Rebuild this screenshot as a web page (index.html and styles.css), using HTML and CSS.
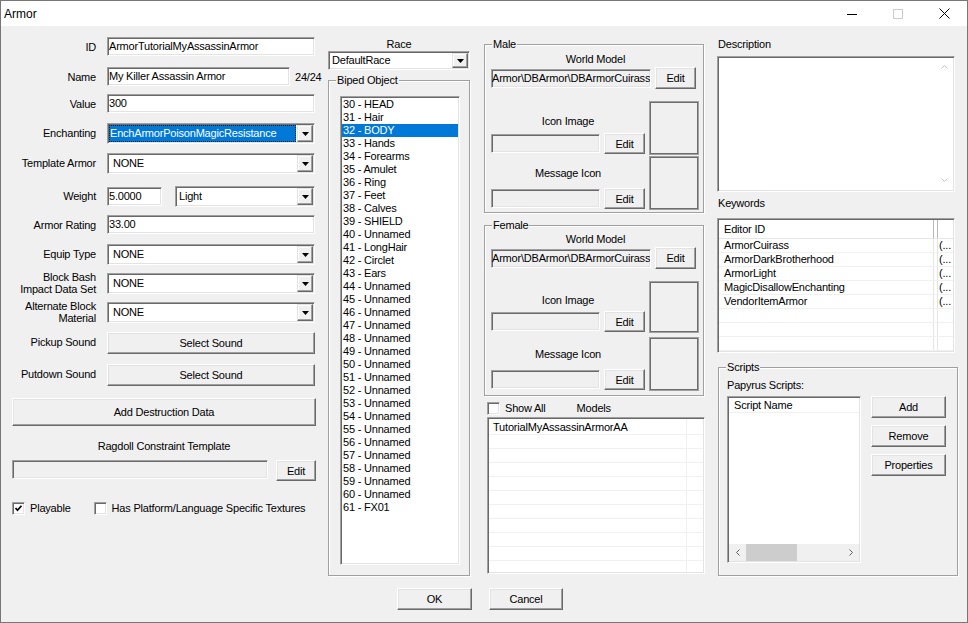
FILE: index.html
```html
<!DOCTYPE html>
<html lang="en">
<head>
    <meta charset="UTF-8">
    <title>Armor</title>
    <link rel="stylesheet" href="styles.css">
</head>
<body>
<div class="window">
    <div class="titlebar">
        <span class="title">Armor</span>
        <div class="caption-buttons">
            <span><svg width="10" height="10" viewBox="0 0 10 10"><path d="M0 5.5h10" stroke="#000"/></svg></span>
            <span><svg width="10" height="10" viewBox="0 0 10 10"><rect x="0.5" y="0.5" width="9" height="9" fill="none" stroke="#cccccc"/></svg></span>
            <span><svg width="11" height="11" viewBox="0 0 11 11"><path d="M0.5 0.5l10 10M10.5 0.5l-10 10" stroke="#000" stroke-width="1"/></svg></span>
        </div>
    </div>

    <div class="columns">
        <!-- record fields -->
        <div class="col-main">
            <div class="form">
                <div class="label">ID</div>
                <div class="field"><div class="edit full">ArmorTutorialMyAssassinArmor</div></div>

                <div class="label">Name</div>
                <div class="field"><div class="edit name">My Killer Assassin Armor</div><span class="counter">24/24</span></div>

                <div class="label">Value</div>
                <div class="field"><div class="edit full">300</div></div>

                <div class="label">Enchanting</div>
                <div class="field">
                    <div class="combo full">
                        <span class="combo-value selected">EnchArmorPoisonMagicResistance</span>
                        <span class="combo-btn"><svg width="7" height="4" viewBox="0 0 7 4"><path d="M0 0h7L3.5 4z"/></svg></span>
                    </div>
                </div>

                <div class="label">Template Armor</div>
                <div class="field">
                    <div class="combo full">
                        <span class="combo-value">NONE</span>
                        <span class="combo-btn"><svg width="7" height="4" viewBox="0 0 7 4"><path d="M0 0h7L3.5 4z"/></svg></span>
                    </div>
                </div>

                <div class="label">Weight</div>
                <div class="field">
                    <div class="edit weight">5.0000</div>
                    <div class="combo weight-class">
                        <span class="combo-value light">Light</span>
                        <span class="combo-btn"><svg width="7" height="4" viewBox="0 0 7 4"><path d="M0 0h7L3.5 4z"/></svg></span>
                    </div>
                </div>

                <div class="label">Armor Rating</div>
                <div class="field"><div class="edit full">33.00</div></div>

                <div class="label">Equip Type</div>
                <div class="field">
                    <div class="combo full">
                        <span class="combo-value">NONE</span>
                        <span class="combo-btn"><svg width="7" height="4" viewBox="0 0 7 4"><path d="M0 0h7L3.5 4z"/></svg></span>
                    </div>
                </div>

                <div class="label">Block Bash<br>Impact Data Set</div>
                <div class="field">
                    <div class="combo full">
                        <span class="combo-value">NONE</span>
                        <span class="combo-btn"><svg width="7" height="4" viewBox="0 0 7 4"><path d="M0 0h7L3.5 4z"/></svg></span>
                    </div>
                </div>

                <div class="label">Alternate Block<br>Material</div>
                <div class="field">
                    <div class="combo full">
                        <span class="combo-value">NONE</span>
                        <span class="combo-btn"><svg width="7" height="4" viewBox="0 0 7 4"><path d="M0 0h7L3.5 4z"/></svg></span>
                    </div>
                </div>

                <div class="label">Pickup Sound</div>
                <div class="field"><div class="btn full">Select Sound</div></div>

                <div class="label">Putdown Sound</div>
                <div class="field"><div class="btn full">Select Sound</div></div>
            </div>

            <div class="btn destruction">Add Destruction Data</div>
            <div class="ragdoll-caption">Ragdoll Constraint Template</div>
            <div class="ragdoll-row">
                <div class="edit readonly ragdoll"></div>
                <div class="btn ragdoll-edit">Edit</div>
            </div>

            <div class="flags">
                <span class="check"><svg width="9" height="9" viewBox="0 0 9 9"><path d="M1.5 4l2 2.2L7.5 1.8" fill="none" stroke="#000" stroke-width="1.7"/></svg></span>
                <span class="check-label">Playable</span>
                <span class="check second"></span>
                <span class="check-label">Has Platform/Language Specific Textures</span>
            </div>
        </div>

        <!-- race / biped slots -->
        <div class="col-race">
            <div class="race-caption">Race</div>
            <div class="combo small">
                <span class="combo-value">DefaultRace</span>
                <span class="combo-btn"><svg width="7" height="4" viewBox="0 0 7 4"><path d="M0 0h7L3.5 4z"/></svg></span>
            </div>
            <div class="group biped">
                <span class="group-title">Biped Object</span>
                <div class="list biped-list">
                    <div class="item">30 - HEAD</div>
                    <div class="item">31 - Hair</div>
                    <div class="item selected">32 - BODY</div>
                    <div class="item">33 - Hands</div>
                    <div class="item">34 - Forearms</div>
                    <div class="item">35 - Amulet</div>
                    <div class="item">36 - Ring</div>
                    <div class="item">37 - Feet</div>
                    <div class="item">38 - Calves</div>
                    <div class="item">39 - SHIELD</div>
                    <div class="item">40 - Unnamed</div>
                    <div class="item">41 - LongHair</div>
                    <div class="item">42 - Circlet</div>
                    <div class="item">43 - Ears</div>
                    <div class="item">44 - Unnamed</div>
                    <div class="item">45 - Unnamed</div>
                    <div class="item">46 - Unnamed</div>
                    <div class="item">47 - Unnamed</div>
                    <div class="item">48 - Unnamed</div>
                    <div class="item">49 - Unnamed</div>
                    <div class="item">50 - Unnamed</div>
                    <div class="item">51 - Unnamed</div>
                    <div class="item">52 - Unnamed</div>
                    <div class="item">53 - Unnamed</div>
                    <div class="item">54 - Unnamed</div>
                    <div class="item">55 - Unnamed</div>
                    <div class="item">56 - Unnamed</div>
                    <div class="item">57 - Unnamed</div>
                    <div class="item">58 - Unnamed</div>
                    <div class="item">59 - Unnamed</div>
                    <div class="item">60 - Unnamed</div>
                    <div class="item">61 - FX01</div>
                </div>
            </div>
        </div>

        <!-- male / female models -->
        <div class="col-models">
            <div class="group model male">
                <span class="group-title">Male</span>
                <div class="caption">World Model</div>
                <div class="model-row">
                    <div class="edit readonly path">Armor\DBArmor\DBArmorCuirass</div>
                    <div class="btn edit-btn">Edit</div>
                </div>
                <div class="icon-area">
                    <div class="icon-fields">
                        <div class="caption icon-caption">Icon Image</div>
                        <div class="model-row icon-row">
                            <div class="edit readonly icon-path"></div>
                            <div class="btn edit-btn">Edit</div>
                        </div>
                        <div class="caption message-caption">Message Icon</div>
                        <div class="model-row message-row">
                            <div class="edit readonly icon-path"></div>
                            <div class="btn edit-btn">Edit</div>
                        </div>
                    </div>
                    <div class="previews">
                        <div class="preview"></div>
                        <div class="preview"></div>
                    </div>
                </div>
            </div>

            <div class="group model female">
                <span class="group-title">Female</span>
                <div class="caption">World Model</div>
                <div class="model-row">
                    <div class="edit readonly path">Armor\DBArmor\DBArmorCuirass</div>
                    <div class="btn edit-btn">Edit</div>
                </div>
                <div class="icon-area">
                    <div class="icon-fields">
                        <div class="caption icon-caption">Icon Image</div>
                        <div class="model-row icon-row">
                            <div class="edit readonly icon-path"></div>
                            <div class="btn edit-btn">Edit</div>
                        </div>
                        <div class="caption message-caption">Message Icon</div>
                        <div class="model-row message-row">
                            <div class="edit readonly icon-path"></div>
                            <div class="btn edit-btn">Edit</div>
                        </div>
                    </div>
                    <div class="previews">
                        <div class="preview"></div>
                        <div class="preview"></div>
                    </div>
                </div>
            </div>

            <div class="models-bar">
                <span class="check"></span>
                <span class="check-label">Show All</span>
                <span class="models-caption">Models</span>
            </div>
            <div class="list models-list">
                <div class="models-body">
                    <div class="lv-row">TutorialMyAssassinArmorAA</div>
                    <div class="lv-row"></div>
                    <div class="lv-row"></div>
                    <div class="lv-row"></div>
                    <div class="lv-row"></div>
                    <div class="lv-row"></div>
                    <div class="lv-row"></div>
                    <div class="lv-row"></div>
                    <div class="lv-row"></div>
                    <div class="lv-row"></div>
                    <div class="lv-row"></div>
                </div>
            </div>
        </div>

        <!-- description, keywords, scripts -->
        <div class="col-side">
            <div class="side-caption">Description</div>
            <div class="list memo">
                <div class="memo-scroll">
                    <svg width="7" height="4" viewBox="0 0 7 4"><path d="M0.5 3.5L3.5 0.5l3 3" fill="none" stroke="#c2c2c2"/></svg>
                    <svg width="7" height="4" viewBox="0 0 7 4"><path d="M0.5 0.5L3.5 3.5l3-3" fill="none" stroke="#c2c2c2"/></svg>
                </div>
            </div>

            <div class="side-caption keywords-caption">Keywords</div>
            <div class="list keywords">
                <div class="kw-header">
                    <span class="kw-id">Editor ID</span><span class="kw-gap"></span><span class="kw-flag"></span>
                </div>
                <div class="kw-row"><span class="kw-id">ArmorCuirass</span><span class="kw-gap"></span><span class="kw-flag">(...</span></div>
                <div class="kw-row"><span class="kw-id">ArmorDarkBrotherhood</span><span class="kw-gap"></span><span class="kw-flag">(...</span></div>
                <div class="kw-row"><span class="kw-id">ArmorLight</span><span class="kw-gap"></span><span class="kw-flag">(...</span></div>
                <div class="kw-row"><span class="kw-id">MagicDisallowEnchanting</span><span class="kw-gap"></span><span class="kw-flag">(...</span></div>
                <div class="kw-row"><span class="kw-id">VendorItemArmor</span><span class="kw-gap"></span><span class="kw-flag">(...</span></div>
                <div class="kw-row"><span class="kw-id"></span><span class="kw-gap"></span><span class="kw-flag"></span></div>
                <div class="kw-row"><span class="kw-id"></span><span class="kw-gap"></span><span class="kw-flag"></span></div>
                <div class="kw-row"><span class="kw-id"></span><span class="kw-gap"></span><span class="kw-flag"></span></div>
            </div>

            <div class="group scripts">
                <span class="group-title">Scripts</span>
                <div class="papyrus">Papyrus Scripts:</div>
                <div class="scripts-body">
                    <div class="list scripts-list">
                        <div class="sl-header">Script Name</div>
                        <div class="sl-body"></div>
                        <div class="hscroll">
                            <span class="hs-arrow"><svg width="4" height="7" viewBox="0 0 4 7"><path d="M3.5 0.5L0.5 3.5l3 3" fill="none" stroke="#606060"/></svg></span>
                            <span class="hs-thumb"></span>
                            <span class="hs-track"></span>
                            <span class="hs-arrow"><svg width="4" height="7" viewBox="0 0 4 7"><path d="M0.5 0.5l3 3-3 3" fill="none" stroke="#606060"/></svg></span>
                        </div>
                    </div>
                    <div class="script-buttons">
                        <div class="btn">Add</div>
                        <div class="btn">Remove</div>
                        <div class="btn">Properties</div>
                    </div>
                </div>
            </div>
        </div>
    </div>

    <div class="footer">
        <div class="btn ok">OK</div>
        <div class="btn cancel">Cancel</div>
    </div>
</div>
</body>
</html>
```

FILE: styles.css
```css
* {
    margin: 0;
    padding: 0;
    box-sizing: border-box;
}

body {
    background: #f0f0f0;
    font-family: "Liberation Sans", Arial, sans-serif;
    font-size: 11px;
    letter-spacing: -0.2px;
    color: #000;
}

.window {
    width: 968px;
    height: 623px;
    border: 1px solid #777;
    background: #f0f0f0;
    display: flex;
    flex-direction: column;
    overflow: hidden;
}

/* title bar */
.titlebar {
    height: 25px;
    flex-shrink: 0;
    background: #fff;
    display: flex;
    align-items: center;
    justify-content: space-between;
}

.titlebar .title {
    font-size: 12px;
    letter-spacing: 0;
    padding-left: 3px;
}

.caption-buttons {
    display: flex;
    align-self: stretch;
}

.caption-buttons span {
    width: 46px;
    display: flex;
    align-items: center;
    justify-content: center;
}

/* columns */
.columns {
    display: flex;
    align-items: flex-start;
    height: 550px;
    padding-left: 11px;
}

.col-main {
    width: 304px;
}

.col-race {
    width: 142px;
    margin-left: 12px;
}

.col-models {
    width: 220px;
    margin-left: 14px;
}

.col-side {
    width: 240px;
    margin-left: 13px;
}

/* common controls */
.edit,
.combo,
.list,
.check {
    background: #fff;
    border: 1px solid;
    border-color: #a0a0a0 #fff #fff #a0a0a0;
    box-shadow: inset 1px 1px #696969, inset -1px -1px #e3e3e3;
}

.edit {
    height: 19px;
    flex-shrink: 0;
    padding: 0 1px;
    line-height: 17px;
    white-space: nowrap;
    overflow: hidden;
}

.edit.readonly {
    background: #f0f0f0;
}

.btn {
    height: 22px;
    flex-shrink: 0;
    display: flex;
    align-items: center;
    justify-content: center;
    background: #f0f0f0;
    border: 1px solid;
    border-color: #fff #696969 #696969 #fff;
    box-shadow: inset -1px -1px #a0a0a0, inset 1px 1px #e3e3e3;
}

.combo {
    height: 21px;
    flex-shrink: 0;
    padding: 1px;
    display: flex;
}

.combo.small {
    height: 19px;
}

.combo-value {
    flex: 1;
    padding-left: 4px;
    line-height: 17px;
    white-space: nowrap;
    overflow: hidden;
}

.combo.small .combo-value {
    padding-left: 2px;
    line-height: 15px;
}

.combo-value.selected {
    padding-left: 1px;
    margin-right: 1px;
    background: #0078d7;
    color: #fff;
    outline: 1px dotted #1a1a1a;
    outline-offset: -1px;
}

.combo-btn {
    width: 16px;
    display: flex;
    align-items: center;
    justify-content: center;
    background: #f0f0f0;
    border: 1px solid;
    border-color: #e3e3e3 #696969 #696969 #e3e3e3;
    box-shadow: inset -1px -1px #a0a0a0, inset 1px 1px #fff;
}

.check {
    width: 13px;
    height: 13px;
    flex-shrink: 0;
    display: flex;
    align-items: center;
    justify-content: center;
}

.check-label {
    margin-left: 5px;
    white-space: nowrap;
}

.group {
    position: relative;
    border: 1px solid #a0a0a0;
    box-shadow: inset 1px 1px #fff, 1px 1px #fff;
}

.group-title {
    position: absolute;
    top: -7px;
    left: 7px;
    padding: 0 1px;
    line-height: 13px;
    background: #f0f0f0;
}

.list {
    padding: 1px;
    overflow: hidden;
}

/* left form */
.form {
    display: grid;
    grid-template-columns: 84px 208px;
    grid-template-rows: 30px 27px 29px 30px 33px 29px 29px 29px 29px 30px 32px 34px;
    column-gap: 11px;
    margin-top: 11px;
}

.form .label {
    height: 20px;
    display: flex;
    align-items: center;
    justify-content: flex-end;
    text-align: right;
    line-height: 12px;
}

.form .field {
    display: flex;
    align-items: center;
    align-self: start;
    white-space: nowrap;
}

.full {
    width: 208px;
}

.edit.name {
    width: 183px;
}

.counter {
    margin-left: 5px;
}

.edit.weight {
    width: 55px;
}

.combo.weight-class {
    width: 140px;
    margin-left: 13px;
}

.combo-value.light {
    padding-left: 2px;
}

.btn.destruction {
    width: 304px;
    height: 28px;
}

.ragdoll-caption {
    margin-top: 14px;
    line-height: 13px;
    text-align: center;
}

.ragdoll-row {
    display: flex;
    align-items: flex-start;
    margin-top: 7px;
}

.edit.ragdoll {
    width: 256px;
}

.btn.ragdoll-edit {
    width: 40px;
    height: 21px;
    margin-left: 8px;
}

.flags {
    display: flex;
    align-items: center;
    margin-top: 21px;
    line-height: 13px;
}

.check.second {
    margin-left: 23px;
}

/* race column */
.race-caption {
    margin-top: 12px;
    line-height: 13px;
    text-align: center;
}

.group.biped {
    height: 496px;
    margin-top: 10px;
    padding: 15px 0 0 11px;
}

.biped-list {
    width: 120px;
    height: 469px;
}

.list .item {
    height: 13px;
    line-height: 13px;
    padding-left: 1px;
    white-space: nowrap;
}

.list .item.selected {
    background: #0078d7;
    color: #fff;
}

/* model groups */
.group.model {
    width: 220px;
    padding: 8px 3px 2px 6px;
}

.group.male {
    margin-top: 18px;
}

.group.female {
    margin-top: 12px;
    padding-top: 7px;
    padding-bottom: 4px;
}

.caption {
    line-height: 13px;
    text-align: center;
}

.model-row {
    display: flex;
    align-items: center;
    margin-top: 1px;
}

.edit.path {
    width: 160px;
    padding-left: 0;
}

.btn.edit-btn {
    width: 41px;
    margin-left: 4px;
}

.icon-area {
    display: flex;
    margin-top: 12px;
}

.icon-fields {
    width: 154px;
}

.icon-caption {
    margin-top: 14px;
}

.icon-row {
    margin-top: 5px;
    height: 21px;
}

.message-caption {
    margin-top: 13px;
}

.message-row {
    margin-top: 8px;
    height: 21px;
}

.icon-row .btn,
.message-row .btn {
    height: 21px;
}

.edit.icon-path {
    width: 109px;
}

.female .icon-caption {
    margin-top: 13px;
}

.female .icon-row {
    margin-top: 4px;
}

.female .message-caption {
    margin-top: 16px;
}

.previews {
    width: 50px;
    margin-left: 4px;
}

.preview {
    height: 54px;
    border: 1px solid #a0a0a0;
    box-shadow: inset 0 0 0 1px #6d6d6d;
}

.preview + .preview {
    margin-top: 1px;
}

.female .preview:first-child {
    height: 52px;
}

.female .preview + .preview {
    margin-top: 4px;
}

.models-bar {
    display: flex;
    align-items: center;
    margin: 6px 0 0 3px;
    line-height: 13px;
}

.check-label + .models-caption {
    margin-left: 31px;
}

.models-list {
    width: 218px;
    height: 157px;
    margin: 2px 0 0 3px;
}

.models-body {
    height: 100%;
    padding-top: 2px;
    background: linear-gradient(to right, transparent 197px, #f0f0f0 197px, #f0f0f0 198px, transparent 198px);
}

.lv-row {
    height: 14px;
    line-height: 13px;
    padding-left: 4px;
    border-bottom: 1px solid #f0f0f0;
    white-space: nowrap;
}

/* side column */
.side-caption {
    margin: 12px 0 0 1px;
    line-height: 13px;
}

.memo {
    width: 238px;
    height: 136px;
    margin-top: 5px;
    display: flex;
    justify-content: flex-end;
}

.memo-scroll {
    width: 17px;
    display: flex;
    flex-direction: column;
    align-items: center;
    justify-content: space-between;
    padding: 7px 0 8px;
}

.keywords-caption {
    margin-top: 5px;
}

.keywords {
    width: 238px;
    height: 135px;
    margin-top: 8px;
}

.kw-header,
.kw-row {
    display: flex;
    white-space: nowrap;
}

.kw-header {
    height: 19px;
    line-height: 18px;
    border-bottom: 1px solid #e5e5e5;
}

.kw-row {
    height: 14px;
    line-height: 13px;
    border-bottom: 1px solid #f0f0f0;
}

.kw-id {
    width: 215px;
    padding-left: 5px;
    border-right: 1px solid #e5e5e5;
}

.kw-gap {
    width: 4px;
    border-right: 1px solid #e5e5e5;
}

.kw-header .kw-id,
.kw-header .kw-gap {
    border-right-color: #b8b8b8;
}

.kw-flag {
    flex: 1;
    padding-left: 1px;
    overflow: hidden;
}

.group.scripts {
    width: 240px;
    height: 209px;
    margin: 14px 0 0 1px;
    padding: 11px 0 0 8px;
}

.papyrus {
    line-height: 13px;
}

.scripts-body {
    display: flex;
    align-items: flex-start;
    margin-top: 4px;
}

.scripts-list {
    width: 134px;
    height: 167px;
    display: flex;
    flex-direction: column;
}

.sl-header {
    height: 15px;
    line-height: 15px;
    padding-left: 5px;
    border-bottom: 1px solid #f0f0f0;
}

.sl-body {
    flex: 1;
}

.hscroll {
    height: 17px;
    display: flex;
    background: #f0f0f0;
}

.hs-arrow {
    width: 17px;
    display: flex;
    align-items: center;
    justify-content: center;
}

.hs-thumb {
    width: 51px;
    background: #cdcdcd;
}

.hs-track {
    flex: 1;
}

.script-buttons {
    width: 75px;
    margin-left: 10px;
    display: flex;
    flex-direction: column;
    gap: 7px;
}

/* footer */
.footer {
    display: flex;
    justify-content: center;
    gap: 17px;
    padding: 12px 8px 0 0;
}

.btn.ok {
    width: 75px;
}

.btn.cancel {
    width: 74px;
}
```
